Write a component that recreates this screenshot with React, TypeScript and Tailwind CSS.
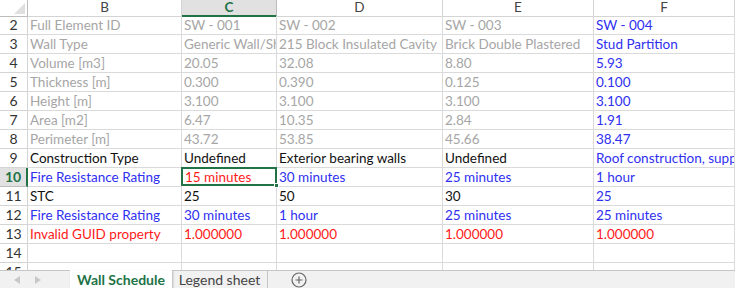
import type { ReactNode } from 'react'

type Tone = 'gray' | 'blue' | 'red' | 'black'

const toneClass: Record<Tone, string> = {
  gray: 'text-[#a6a6a6]',
  blue: 'text-[#2f2ff0]',
  red: 'text-[#ff1a1a]',
  black: 'text-[#111]',
}

type Row = { n: number; tone: Tone[]; cells: string[] }

// per-row tones: [B, C, D, E, F]
const rows: Row[] = [
  { n: 2, tone: ['gray', 'gray', 'gray', 'gray', 'blue'], cells: ['Full Element ID', 'SW - 001', 'SW - 002', 'SW - 003', 'SW - 004'] },
  { n: 3, tone: ['gray', 'gray', 'gray', 'gray', 'blue'], cells: ['Wall Type', 'Generic Wall/Shaft', '215 Block Insulated Cavity', 'Brick Double Plastered', 'Stud Partition'] },
  { n: 4, tone: ['gray', 'gray', 'gray', 'gray', 'blue'], cells: ['Volume [m3]', '20.05', '32.08', '8.80', '5.93'] },
  { n: 5, tone: ['gray', 'gray', 'gray', 'gray', 'blue'], cells: ['Thickness [m]', '0.300', '0.390', '0.125', '0.100'] },
  { n: 6, tone: ['gray', 'gray', 'gray', 'gray', 'blue'], cells: ['Height [m]', '3.100', '3.100', '3.100', '3.100'] },
  { n: 7, tone: ['gray', 'gray', 'gray', 'gray', 'blue'], cells: ['Area [m2]', '6.47', '10.35', '2.84', '1.91'] },
  { n: 8, tone: ['gray', 'gray', 'gray', 'gray', 'blue'], cells: ['Perimeter [m]', '43.72', '53.85', '45.66', '38.47'] },
  { n: 9, tone: ['black', 'black', 'black', 'black', 'blue'], cells: ['Construction Type', 'Undefined', 'Exterior bearing walls', 'Undefined', 'Roof construction, supporting structure'] },
  { n: 10, tone: ['blue', 'red', 'blue', 'blue', 'blue'], cells: ['Fire Resistance Rating', '15 minutes', '30 minutes', '25 minutes', '1 hour'] },
  { n: 11, tone: ['black', 'black', 'black', 'black', 'blue'], cells: ['STC', '25', '50', '30', '25'] },
  { n: 12, tone: ['blue', 'blue', 'blue', 'blue', 'blue'], cells: ['Fire Resistance Rating', '30 minutes', '1 hour', '25 minutes', '25 minutes'] },
  { n: 13, tone: ['red', 'red', 'red', 'red', 'red'], cells: ['Invalid GUID property', '1.000000', '1.000000', '1.000000', '1.000000'] },
  { n: 14, tone: ['black', 'black', 'black', 'black', 'black'], cells: ['', '', '', '', ''] },
  { n: 15, tone: ['black', 'black', 'black', 'black', 'black'], cells: ['', '', '', '', ''] },
]

const cols = 'grid-cols-[28px_154px_95px_166px_151px_141px]'

function Cell({ children, className = '' }: { children?: ReactNode; className?: string }) {
  return (
    <div className={`h-[19px] border-b border-r border-[#dadada] pl-[2px] overflow-hidden whitespace-nowrap leading-[18px] ${className}`}>
      {children}
    </div>
  )
}

export default function App() {
  return (
    <div className="w-[735px] h-[288px] overflow-hidden bg-white flex flex-col text-[13.5px]" style={{ fontFamily: 'Lato, "Open Sans", sans-serif' }}>
      <div className="flex-1 overflow-hidden">
        {/* column header */}
        <div className={`grid ${cols} h-[16px]`}>
          <div className="relative border-b border-r border-[#bdbdbd] bg-white">
            <div className="absolute right-[2px] bottom-[2px] w-0 h-0 border-l-[11px] border-l-transparent border-b-[11px] border-b-[#dfdfdf]" />
          </div>
          {['B', 'C', 'D', 'E', 'F'].map((c) =>
            c === 'C' ? (
              <div key={c} className="border-b-2 border-b-[#217346] border-r border-r-[#bdbdbd] bg-[#e1e1e1] text-center text-[#217346] font-bold leading-[15px]">
                {c}
              </div>
            ) : (
              <div key={c} className="border-b border-r border-[#d4d4d4] text-center text-[#444] leading-[15px]">
                {c}
              </div>
            ),
          )}
        </div>

        {rows.map((r) => (
          <div key={r.n} className={`grid ${cols}`}>
            {r.n === 10 ? (
              <div className="h-[19px] border-b border-[#bdbdbd] border-r-2 border-r-[#217346] bg-[#e1e1e1] text-center text-[#217346] font-bold leading-[18px] text-[14px]">
                {r.n}
              </div>
            ) : (
              <div className="h-[19px] border-b border-r border-[#d4d4d4] text-center text-[#333] leading-[18px] text-[14px]">{r.n}</div>
            )}
            {r.cells.map((txt, i) =>
              r.n === 10 && i === 1 ? (
                <div key={i} className="relative h-[19px] border-2 border-[#217346] -mt-[1px] -ml-[1px] pl-[2px] whitespace-nowrap leading-[16px] text-[#ff1a1a]">
                  {txt}
                  <span className="absolute -right-[4px] -bottom-[4px] w-[5px] h-[5px] bg-[#217346] border border-white" />
                </div>
              ) : (
                <Cell key={i} className={toneClass[r.tone[i]]}>
                  {txt}
                </Cell>
              ),
            )}
          </div>
        ))}
      </div>

      {/* sheet tabs */}
      <div className="h-[18px] shrink-0 flex items-stretch bg-[#f1f1f1] border-t border-[#c6c6c6] text-[14px]">
        <div className="w-[70px] flex items-center gap-[15px] pl-[14px]">
          <svg width="6" height="8" viewBox="0 0 6 8" fill="#c8c8c8"><path d="M6 0v8L0 4z" /></svg>
          <svg width="6" height="8" viewBox="0 0 6 8" fill="#c8c8c8"><path d="M0 0v8l6-4z" /></svg>
        </div>
        <div className="w-[102px] -mt-px bg-white flex items-center justify-center text-[#217346] font-bold shadow-[1px_1px_2px_rgba(0,0,0,0.25)]">
          Wall Schedule
        </div>
        <div className="w-[96px] border-r border-[#c6c6c6] flex items-center justify-center text-[#444]">Legend sheet</div>
        <div className="flex items-center pl-[23px]">
          <svg width="16" height="16" viewBox="0 0 16 16" fill="none" stroke="#666" strokeWidth="1.2">
            <circle cx="8" cy="8" r="7" />
            <path d="M8 4.5v7M4.5 8h7" />
          </svg>
        </div>
      </div>
    </div>
  )
}
